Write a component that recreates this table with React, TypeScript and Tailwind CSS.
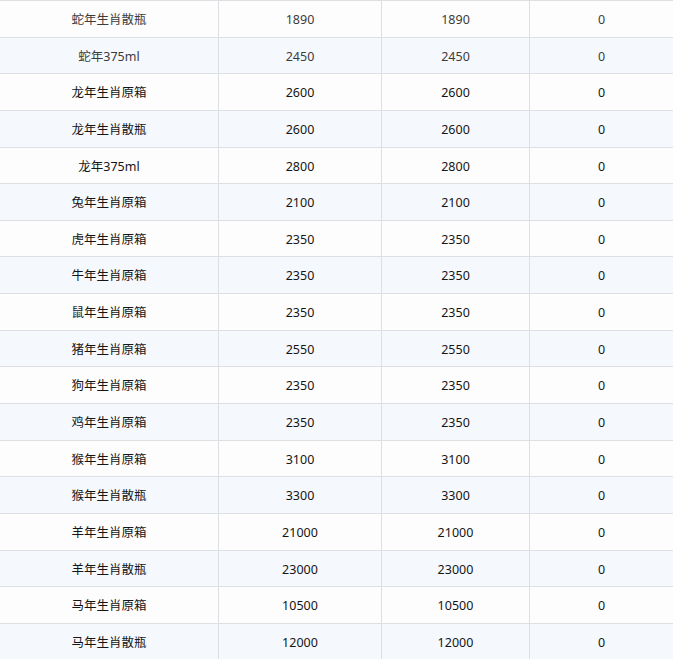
const rows: [string, string, string, string][] = [
  ["蛇年生肖散瓶", "1890", "1890", "0"],
  ["蛇年375ml", "2450", "2450", "0"],
  ["龙年生肖原箱", "2600", "2600", "0"],
  ["龙年生肖散瓶", "2600", "2600", "0"],
  ["龙年375ml", "2800", "2800", "0"],
  ["兔年生肖原箱", "2100", "2100", "0"],
  ["虎年生肖原箱", "2350", "2350", "0"],
  ["牛年生肖原箱", "2350", "2350", "0"],
  ["鼠年生肖原箱", "2350", "2350", "0"],
  ["猪年生肖原箱", "2550", "2550", "0"],
  ["狗年生肖原箱", "2350", "2350", "0"],
  ["鸡年生肖原箱", "2350", "2350", "0"],
  ["猴年生肖原箱", "3100", "3100", "0"],
  ["猴年生肖散瓶", "3300", "3300", "0"],
  ["羊年生肖原箱", "21000", "21000", "0"],
  ["羊年生肖散瓶", "23000", "23000", "0"],
  ["马年生肖原箱", "10500", "10500", "0"],
  ["马年生肖散瓶", "12000", "12000", "0"],
];

export default function App() {
  return (
    <div
      className="w-[673px] h-[659px] overflow-hidden bg-[#fdfdfd] border-t border-[#dedfe3] text-[12.5px]"
      style={{ fontFamily: '"Noto Sans", "Noto Sans CJK SC", sans-serif' }}
    >
      {rows.map((row, i) => (
        <div
          key={i}
          className={`grid grid-cols-[219px_163px_148px_143px] h-[36.65px] border-b border-[#dedfe3] ${
            i % 2 === 1 ? "bg-[#f5f9fe]" : "bg-[#fdfdfd]"
          } ${i < 2 ? "text-[#3c3c3c]" : "text-[#151515]"}`}
        >
          {row.map((cell, j) => (
            <div
              key={j}
              className={`flex items-center justify-center pt-[3px] ${
                j < 3 ? "border-r border-[#dedfe3]" : ""
              }`}
            >
              {cell}
            </div>
          ))}
        </div>
      ))}
    </div>
  );
}
